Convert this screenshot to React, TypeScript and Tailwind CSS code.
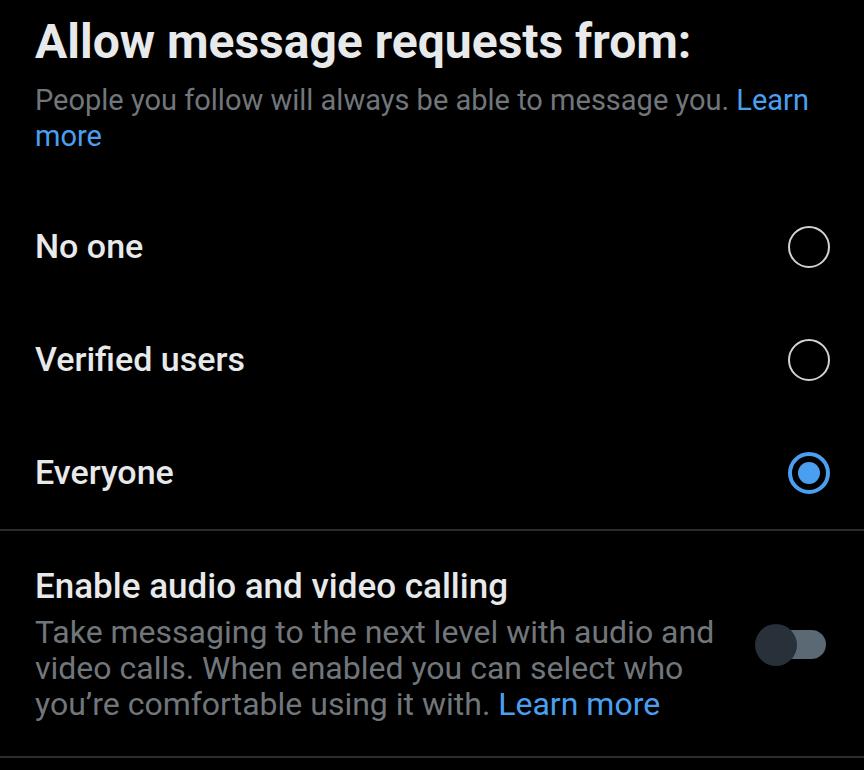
import React, { useState } from 'react'

const options = ['No one', 'Verified users', 'Everyone']

const Radio: React.FC<{ checked: boolean }> = ({ checked }) =>
    checked ? (
        <div className="w-[42px] h-[42px] rounded-full border-[4px] border-[#4a9ff0] flex items-center justify-center">
            <div className="w-[22px] h-[22px] rounded-full bg-[#4a9ff0]" />
        </div>
    ) : (
        <div className="w-[42px] h-[42px] rounded-full border-[2.5px] border-[#cfd3d6]" />
    )

export default function App() {
    const [selected, setSelected] = useState('Everyone')
    const [calling, setCalling] = useState(false)

    return (
        <div className="w-[864px] h-[770px] bg-black overflow-hidden font-['Roboto',sans-serif] text-[#e7e9ea]">
            {/* header */}
            <div className="px-[35px] pt-[14px]">
                <h1 className="text-[48px] leading-[56px] font-bold">Allow message requests from:</h1>
                <p className="mt-[12px] text-[29px] leading-[36px] text-[#71767b]">
                    People you follow will always be able to message you. <span className="text-[#4a9ff0]">Learn more</span>
                </p>
            </div>

            {/* options */}
            <div className="mt-[36px] border-b-2 border-[#2a2d30]">
                {options.map(o => (
                    <button
                        key={o}
                        onClick={() => setSelected(o)}
                        className="w-full h-[113px] flex items-center justify-between pl-[35px] pr-[34px] text-left"
                    >
                        <span className="text-[34px] font-medium">{o}</span>
                        <Radio checked={selected === o} />
                    </button>
                ))}
            </div>

            {/* calling */}
            <div className="flex items-center justify-between pl-[35px] pr-[38px] pt-[36px] pb-[34px] border-b-2 border-[#2a2d30]">
                <div className="w-[705px]">
                    <div className="text-[35px] leading-[40px] font-medium">Enable audio and video calling</div>
                    <p className="mt-[7px] text-[32px] leading-[36px] text-[#71767b]">
                        Take messaging to the next level with audio and video calls. When enabled you can select who you’re comfortable using it with. <span className="text-[#4a9ff0]">Learn more</span>
                    </p>
                </div>
                <button onClick={() => setCalling(c => !c)} className="relative w-[71px] h-[42px] flex items-center">
                    <div className="ml-[10px] w-[61px] h-[29px] rounded-full bg-[#5b6975]" />
                    <div className="absolute left-0 top-0 w-[42px] h-[42px] rounded-full bg-[#283039]" />
                </button>
            </div>
        </div>
    )
}
